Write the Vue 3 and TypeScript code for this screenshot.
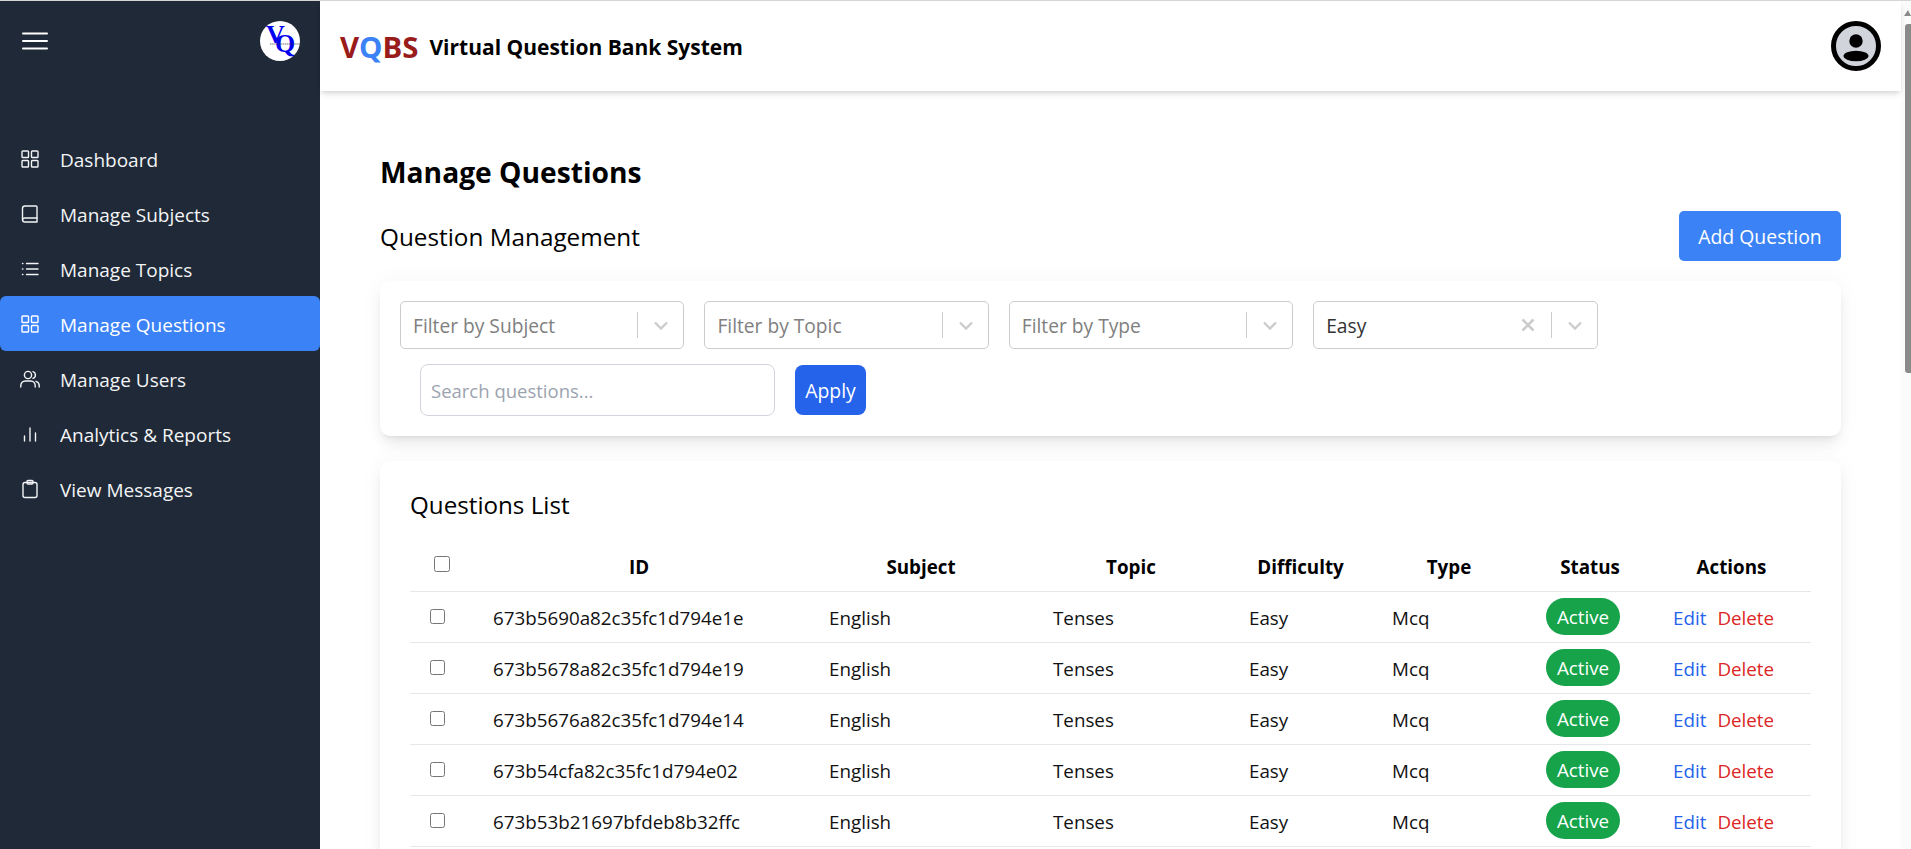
<script setup lang="ts">
interface NavItem {
  label: string
  icon: string
  active?: boolean
}

const navItems: NavItem[] = [
  { label: 'Dashboard', icon: 'grid' },
  { label: 'Manage Subjects', icon: 'book' },
  { label: 'Manage Topics', icon: 'list' },
  { label: 'Manage Questions', icon: 'grid', active: true },
  { label: 'Manage Users', icon: 'users' },
  { label: 'Analytics & Reports', icon: 'bars' },
  { label: 'View Messages', icon: 'clipboard' },
]

const filters = ['Filter by Subject', 'Filter by Topic', 'Filter by Type']

const questionIds = [
  '673b5690a82c35fc1d794e1e',
  '673b5678a82c35fc1d794e19',
  '673b5676a82c35fc1d794e14',
  '673b54cfa82c35fc1d794e02',
  '673b53b21697bfdeb8b32ffc',
]
</script>

<template>
  <div class="page">
    <aside class="sidebar">
      <div class="side-top">
        <svg class="burger" width="26" height="18" viewBox="0 0 26 18">
          <path d="M1 1.500h24M1 9h24M1 16.500h24" stroke="#fff" stroke-width="2" stroke-linecap="round" fill="none" />
        </svg>
        <svg class="logo" width="40" height="40" viewBox="0 0 40 40">
          <circle cx="20" cy="20" r="20" fill="#fff" />
          <text x="6" y="22" class="logo-letter">V<tspan x="15" y="31">Q</tspan></text>
          <path d="M10 23h30" stroke="#333" stroke-width="0.7" stroke-dasharray="1.500 0.600" />
        </svg>
      </div>
      <nav class="nav">
        <a v-for="item in navItems" :key="item.label" class="nav-item" :class="{ active: item.active }">
          <svg class="nav-icon" width="20" height="20" viewBox="0 0 20 20" fill="none" stroke="currentColor" stroke-width="1.400" stroke-linejoin="round" stroke-linecap="round">
            <template v-if="item.icon === 'grid'">
              <rect x="2" y="2" width="6.500" height="6.500" rx="0.800" />
              <rect x="11.500" y="2" width="6.500" height="6.500" rx="0.800" />
              <rect x="2" y="11.500" width="6.500" height="6.500" rx="0.800" />
              <rect x="11.500" y="11.500" width="6.500" height="6.500" rx="0.800" />
            </template>
            <template v-else-if="item.icon === 'book'">
              <path d="M5 2h11a1 1 0 0 1 1 1v15H5a2.500 2.500 0 0 1-2.500-2.500v-11A2.500 2.500 0 0 1 5 2z" />
              <path d="M2.500 15.500A2.500 2.500 0 0 1 5 14h12" />
            </template>
            <template v-else-if="item.icon === 'list'">
              <path d="M6.500 4.500H18M6.500 10H18M6.500 15.500H18" />
              <path d="M2.500 4.500h.4M2.500 10h.4M2.500 15.500h.4" />
            </template>
            <template v-else-if="item.icon === 'users'">
              <circle cx="8" cy="6" r="3.600" />
              <path d="M0.800 18v-1.500a4.500 4.500 0 0 1 4.500-4.500h5.400a4.500 4.500 0 0 1 4.500 4.500V18" />
              <path d="M13 2.600a3.600 3.600 0 0 1 0 6.800M16 12.300a4.500 4.500 0 0 1 3.200 4.200V18" />
            </template>
            <template v-else-if="item.icon === 'bars'">
              <path d="M4.500 17v-5M10 17V4M15.500 17V9" />
            </template>
            <template v-else>
              <rect x="3" y="3.500" width="14" height="15" rx="2" />
              <rect x="7" y="1.500" width="6" height="3.500" rx="1" />
            </template>
          </svg>
          <span class="nav-label">{{ item.label }}</span>
        </a>
      </nav>
    </aside>

    <div class="right">
      <header class="topbar">
        <div class="brand">
          <span class="brand-mark"><span class="red">V</span><span class="blue">Q</span><span class="red">BS</span></span>
          <span class="brand-name">Virtual Question Bank System</span>
        </div>
        <svg class="avatar" width="50" height="50" viewBox="0 0 50 50">
          <circle cx="25" cy="25" r="22.500" fill="#d1d5db" stroke="#000" stroke-width="5" />
          <circle cx="25" cy="20" r="6.700" fill="#000" />
          <ellipse cx="25" cy="35" rx="12.500" ry="5.200" fill="#000" />
        </svg>
      </header>

      <main class="content">
        <h1>Manage Questions</h1>
        <div class="head-row">
          <h2>Question Management</h2>
          <button class="add-btn">Add Question</button>
        </div>

        <section class="card filter-card">
          <div class="select-row">
            <div v-for="f in filters" :key="f" class="select">
              <span class="select-text placeholder">{{ f }}</span>
              <span class="sep"></span>
              <svg class="chev" width="20" height="20" viewBox="0 0 20 20"><path d="M4 7.500 10 13.500l6-6" fill="none" stroke="#ccc" stroke-width="2.400" /></svg>
            </div>
            <div class="select">
              <span class="select-text">Easy</span>
              <svg class="clear" width="20" height="20" viewBox="0 0 20 20"><path d="M4.500 4.500l11 11M15.500 4.500l-11 11" stroke="#ccc" stroke-width="2.600" fill="none" /></svg>
              <span class="sep"></span>
              <svg class="chev" width="20" height="20" viewBox="0 0 20 20"><path d="M4 7.500 10 13.500l6-6" fill="none" stroke="#ccc" stroke-width="2.400" /></svg>
            </div>
          </div>
          <div class="search-row">
            <input class="search" type="text" placeholder="Search questions..." />
            <button class="apply-btn">Apply</button>
          </div>
        </section>

        <section class="card list-card">
          <h3>Questions List</h3>
          <table>
            <thead>
              <tr>
                <th class="head-check"><input type="checkbox" /></th>
                <th>ID</th>
                <th>Subject</th>
                <th>Topic</th>
                <th>Difficulty</th>
                <th>Type</th>
                <th>Status</th>
                <th>Actions</th>
              </tr>
            </thead>
            <tbody>
              <tr v-for="id in questionIds" :key="id">
                <td class="row-check"><input type="checkbox" /></td>
                <td class="id-cell">{{ id }}</td>
                <td>English</td>
                <td>Tenses</td>
                <td>Easy</td>
                <td>Mcq</td>
                <td class="status-cell"><span class="pill">Active</span></td>
                <td class="action-cell"><a class="edit">Edit</a><a class="del">Delete</a></td>
              </tr>
            </tbody>
          </table>
        </section>
      </main>
      <div class="corner-widget"></div>
    </div>

    <div class="scrollbar">
      <span class="arrow"></span>
      <span class="thumb"></span>
    </div>
  </div>
</template>

<style>
html,
body {
  margin: 0;
  overflow: hidden;
}
</style>

<style scoped>
.page {
  display: flex;
  height: 849px;
  overflow: hidden;
  border-top: 1px solid #d4d4d4;
  box-sizing: border-box;
  background: #fff;
  color: #000;
  font-family: "Open Sans", "Noto Sans", sans-serif;
  font-size: 18.8px;
}

.sidebar {
  width: 320px;
  flex: none;
  background: #1f2937;
  color: #fff;
}

.side-top {
  display: flex;
  justify-content: space-between;
  align-items: center;
  height: 80px;
  padding: 0 20px 0 22px;
}

.burger,
.logo,
.avatar {
  display: block;
}

.logo-letter {
  font-family: "Liberation Serif", serif;
  font-weight: 700;
  font-size: 26px;
  fill: #0000f0;
}

.nav {
  display: flex;
  flex-direction: column;
  margin-top: 50px;
}

.nav-item {
  display: flex;
  align-items: center;
  gap: 20px;
  height: 55px;
  padding-left: 20px;
  border-radius: 6px;
  color: #f3f4f6;
}

.nav-item.active {
  background: #3b82f6;
  color: #fff;
}

.nav-icon {
  flex: none;
}

.nav-label {
  padding-top: 2px;
  font-size: 19px;
}

.right {
  position: relative;
  flex: 1;
  min-width: 0;
}

.topbar {
  position: relative;
  z-index: 1;
  display: flex;
  justify-content: space-between;
  align-items: center;
  height: 90px;
  padding: 0 20px;
  background: #fff;
  box-shadow: 0 4px 6px -1px rgba(0, 0, 0, 0.12), 0 2px 4px -2px rgba(0, 0, 0, 0.1);
}

.brand {
  display: flex;
  align-items: center;
  gap: 11px;
  padding-top: 2px;
}

.brand-mark {
  font-size: 29.4px;
  font-weight: 700;
}

.red {
  color: #991b1b;
}

.blue {
  color: #3b82f6;
}

.brand-name {
  font-size: 21px;
  font-weight: 700;
}

.content {
  padding: 62px 60px 0;
}

h1 {
  margin: 0 0 20px;
  font-size: 28.2px;
  line-height: 38px;
  font-weight: 700;
}

.head-row {
  display: flex;
  justify-content: space-between;
  align-items: center;
  margin-bottom: 20px;
}

h2 {
  margin: 0;
  font-size: 24.3px;
  font-weight: 400;
}

button {
  border: none;
  color: #fff;
  font: inherit;
  font-size: 19.4px;
}

.add-btn {
  width: 162px;
  height: 50px;
  border-radius: 5px;
  background: #3b82f6;
}

.card {
  background: #fff;
  border-radius: 10px;
  box-shadow: 0 10px 15px -3px rgba(0, 0, 0, 0.08), 0 4px 6px -4px rgba(0, 0, 0, 0.1), 0 0 24px rgba(0, 0, 0, 0.04);
}

.filter-card {
  padding: 20px;
  margin-bottom: 25px;
}

.select-row {
  display: flex;
  gap: 20px;
}

.select {
  display: flex;
  align-items: center;
  width: 284.4px;
  height: 48px;
  box-sizing: border-box;
  padding: 0 12px 0 12px;
  border: 1px solid #ccc;
  border-radius: 5px;
}

.select-text {
  flex: 1;
  padding-top: 1px;
  color: #333;
  font-size: 19.2px;
}

.placeholder {
  color: #808080;
}

.sep {
  width: 1px;
  height: 26px;
  margin: 0 13px;
  background: #ccc;
}

.clear,
.chev {
  flex: none;
}

.search-row {
  display: flex;
  align-items: flex-end;
  gap: 20px;
  margin: 15px 0 0 20px;
}

.search {
  width: 355px;
  height: 52px;
  box-sizing: border-box;
  padding: 0 10px;
  border: 1px solid #d1d5db;
  border-radius: 8px;
  outline: none;
  color: #111;
  font: inherit;
  font-size: 18.5px;
}

.search::placeholder {
  color: #9ca3af;
}

.apply-btn {
  width: 71px;
  height: 50px;
  padding: 0;
  margin-bottom: 1px;
  border-radius: 8px;
  background: #2563eb;
}

.list-card {
  padding: 30px;
}

h3 {
  margin: 0 0 21px;
  font-size: 24.2px;
  line-height: 28px;
  font-weight: 400;
}

table {
  width: 1401px;
  table-layout: fixed;
  border-collapse: collapse;
}

th:nth-child(1) { width: 63px; }
th:nth-child(2) { width: 340px; }
th:nth-child(3) { width: 224px; }
th:nth-child(4) { width: 196px; }
th:nth-child(5) { width: 143px; }
th:nth-child(6) { width: 154px; }
th:nth-child(7) { width: 128px; }
th:nth-child(8) { width: 153px; padding-right: 6px; }

th {
  box-sizing: border-box;
  height: 51px;
  padding: 4px 8px 0 0;
  border-bottom: 1px solid #e5e7eb;
  font-weight: 700;
  text-align: center;
}

td {
  box-sizing: border-box;
  height: 51px;
  padding: 2px 0 0 16px;
  border-bottom: 1px solid #e5e7eb;
  color: #111;
}

td.id-cell {
  padding-left: 20px;
}

td.action-cell {
  padding-left: 15px;
}

td.status-cell {
  padding-top: 0;
}

input[type='checkbox'] {
  display: block;
  margin: 0;
}

th.head-check {
  padding: 0;
}

.head-check input {
  width: 16px;
  height: 16px;
  margin: -2px auto 0;
}

td.row-check {
  padding: 0 0 0 20px;
}

.row-check input {
  width: 15px;
  height: 15px;
}

.pill {
  display: block;
  width: 74px;
  height: 37px;
  border-radius: 19px;
  background: #16a34a;
  color: #fff;
  line-height: 39px;
  text-align: center;
}

.edit {
  margin-right: 11px;
  color: #2563eb;
}

.del {
  color: #dc2626;
}

.corner-widget {
  position: absolute;
  right: 0;
  top: 840px;
  width: 46px;
  height: 30px;
  border-radius: 20px 0 0 0;
  background: #fff;
}

.scrollbar {
  display: flex;
  flex-direction: column;
  align-items: flex-end;
  flex: none;
  width: 10px;
  background: #fbfbfb;
}

.arrow {
  width: 0;
  height: 0;
  margin-top: 9px;
  border-left: 4px solid transparent;
  border-right: 3px solid transparent;
  border-bottom: 6px solid #8a8a8a;
}

.thumb {
  width: 6px;
  height: 349px;
  margin-top: 8px;
  border-radius: 3px 0 0 3px;
  background: #8a8a8a;
}
</style>
